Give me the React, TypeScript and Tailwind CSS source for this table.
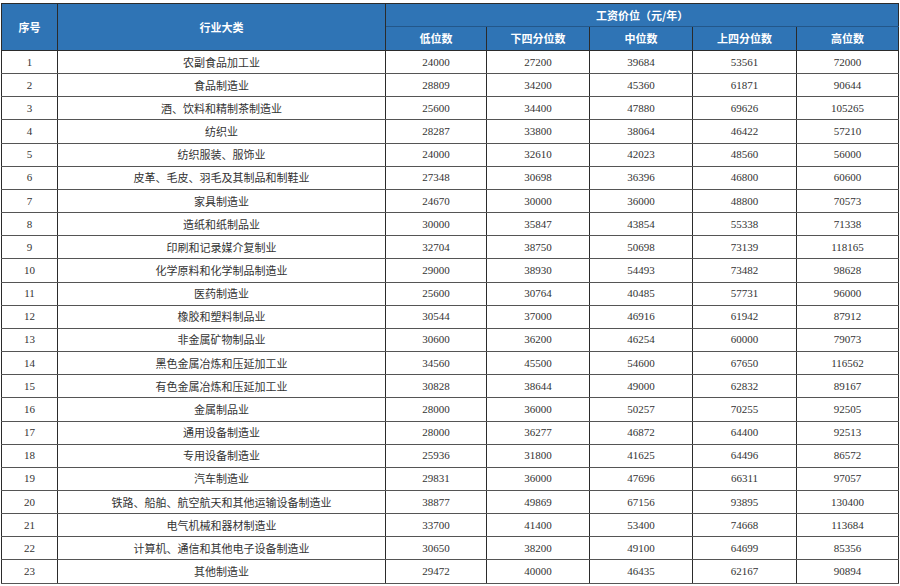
const rows: [string, number[]][] = [
  ['农副食品加工业', [24000, 27200, 39684, 53561, 72000]],
  ['食品制造业', [28809, 34200, 45360, 61871, 90644]],
  ['酒、饮料和精制茶制造业', [25600, 34400, 47880, 69626, 105265]],
  ['纺织业', [28287, 33800, 38064, 46422, 57210]],
  ['纺织服装、服饰业', [24000, 32610, 42023, 48560, 56000]],
  ['皮革、毛皮、羽毛及其制品和制鞋业', [27348, 30698, 36396, 46800, 60600]],
  ['家具制造业', [24670, 30000, 36000, 48800, 70573]],
  ['造纸和纸制品业', [30000, 35847, 43854, 55338, 71338]],
  ['印刷和记录媒介复制业', [32704, 38750, 50698, 73139, 118165]],
  ['化学原料和化学制品制造业', [29000, 38930, 54493, 73482, 98628]],
  ['医药制造业', [25600, 30764, 40485, 57731, 96000]],
  ['橡胶和塑料制品业', [30544, 37000, 46916, 61942, 87912]],
  ['非金属矿物制品业', [30600, 36200, 46254, 60000, 79073]],
  ['黑色金属冶炼和压延加工业', [34560, 45500, 54600, 67650, 116562]],
  ['有色金属冶炼和压延加工业', [30828, 38644, 49000, 62832, 89167]],
  ['金属制品业', [28000, 36000, 50257, 70255, 92505]],
  ['通用设备制造业', [28000, 36277, 46872, 64400, 92513]],
  ['专用设备制造业', [25936, 31800, 41625, 64496, 86572]],
  ['汽车制造业', [29831, 36000, 47696, 66311, 97057]],
  ['铁路、船舶、航空航天和其他运输设备制造业', [38877, 49869, 67156, 93895, 130400]],
  ['电气机械和器材制造业', [33700, 41400, 53400, 74668, 113684]],
  ['计算机、通信和其他电子设备制造业', [30650, 38200, 49100, 64699, 85356]],
  ['其他制造业', [29472, 40000, 46435, 62167, 90894]],
];

const subHeads = ['低位数', '下四分位数', '中位数', '上四分位数', '高位数'];

export default function App() {
  return (
    <div className="w-[900px] h-[586px] bg-white pl-[1px] pt-[3px] overflow-hidden font-['Liberation_Serif','Noto_Sans_CJK_SC',serif]">
      <table className="w-[897px] table-fixed border-collapse border border-[#2b2b2b] text-[11px]">
        <colgroup>
          <col className="w-[56px]" />
          <col className="w-[328px]" />
          <col className="w-[101px]" />
          <col className="w-[103px]" />
          <col className="w-[103px]" />
          <col className="w-[104px]" />
          <col className="w-[102px]" />
        </colgroup>
        <thead className="bg-[#2f74b5] text-white font-bold font-['Noto_Sans_CJK_SC',sans-serif]">
          <tr className="h-[23px]">
            <th rowSpan={2} className="border border-[#2b2b2b] font-bold">序号</th>
            <th rowSpan={2} className="border border-[#2b2b2b] font-bold">行业大类</th>
            <th colSpan={5} className="border border-[#2b2b2b] border-b-[#23578a] font-bold">工资价位（元/年）</th>
          </tr>
          <tr className="h-[24px]">
            {subHeads.map((h) => (
              <th key={h} className="border border-[#2b2b2b] font-bold">{h}</th>
            ))}
          </tr>
        </thead>
        <tbody className="text-[#333]">
          {rows.map(([name, vals], i) => (
            <tr key={name} className="h-[23.17px]">
              <td className="border-x border-x-[#2b2b2b] border-b border-b-[#555] text-center leading-none">{i + 1}</td>
              <td className="border-x border-x-[#2b2b2b] border-b border-b-[#555] text-center leading-none font-['Noto_Sans_CJK_SC',sans-serif]">{name}</td>
              {vals.map((v, j) => (
                <td key={j} className="border-x border-x-[#2b2b2b] border-b border-b-[#555] text-center leading-none">{v}</td>
              ))}
            </tr>
          ))}
        </tbody>
      </table>
    </div>
  );
}
